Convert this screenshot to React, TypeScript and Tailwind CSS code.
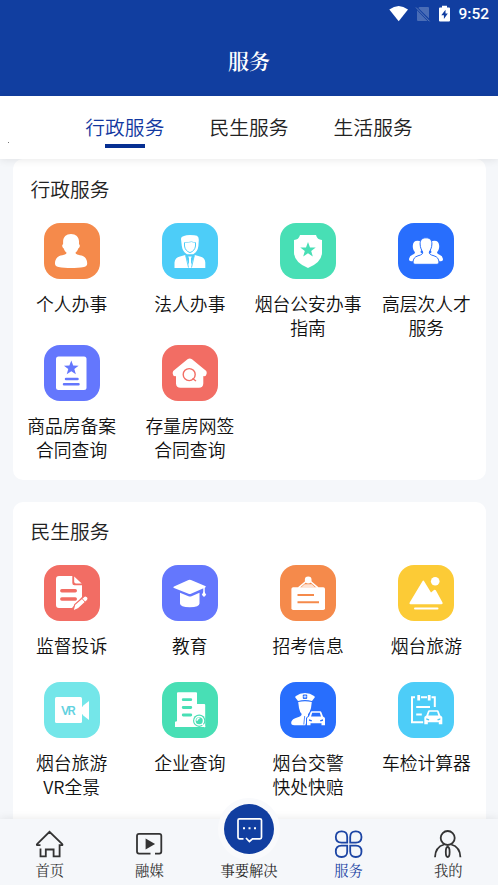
import { ReactNode, useState } from 'react'

const STAR = 'M0 -8 L2 -2.6 L7.7 -2.5 L3.2 1 L4.8 6.5 L0 3.3 L-4.8 6.5 L-3.2 1 L-7.7 -2.5 L-2 -2.6 Z'

interface Service {
  name: string[]
  color: string
  icon: ReactNode
}

// small front-view car, 18x15 box
function Car({ x, y, back }: { x: number; y: number; back: string }) {
  return (
    <g transform={`translate(${x} ${y})`}>
      <path d="M4 -1.2H14L17 5L19 7V15.5H-1V7L1 5Z" fill={back} />
      <path d="M4.8 0.3H13.2Q14 0.3 14.3 1L16 5.4L17.5 6.6Q18 7 18 8V14.2H14.5V12.3H3.5V14.2H0V8Q0 7 .5 6.6L2 5.4L3.7 1Q4 .3 4.8 .3Z" />
      <path d="M5.2 1.8H12.8L14 5.4H4Z" fill={back} />
      <path d="M2 8.3L5 9.2L4.5 10.4L2 9.8ZM16 8.3L13 9.2L13.5 10.4L16 9.8Z" fill={back} />
    </g>
  )
}

const adminServices: Service[] = [
  {
    name: ['个人办事'],
    color: '#f58a4b',
    icon: (
      <path d="M27 11C31.8 11 35 14 35 18.5V21.2C36.4 21.6 36 24.6 34.2 25.4C33.6 27.5 32.6 28.8 31.4 29.8C31.6 31.4 34 31.8 37.5 32.6C41.5 33.6 43.2 37 43.2 40.5C43.2 42.6 42.2 43.4 40 43.9C32 45.3 22 45.3 14.5 43.9C12 43.4 11 42.6 11 40.5C11 37 12.8 33.6 16.7 32.6C20.2 31.8 22.5 31.4 22.6 29.8C21.4 28.8 20.4 27.5 19.8 25.4C18 24.6 17.7 21.6 19.1 21.2V18.5C19.1 14 22.2 11 27 11Z" />
    ),
  },
  {
    name: ['法人办事'],
    color: '#4dcdf8',
    icon: (
      <>
        <path d="M19 16Q19 13.5 22 13Q24 12 28 12Q33 12 35 12.8Q37 14 36.8 17L36.4 23Q35.8 28.5 31.2 31.2H25Q20.5 28.5 19.8 23Z" />
        <path d="M22.5 19.5V23Q23.2 28 28 29.6Q32.8 28 33.5 23V19.5" fill="none" stroke="#4dcdf8" strokeWidth="1" />
        <path d="M22.5 19.5Q27 19.8 29.5 18.6Q31.5 19.8 33.5 19.5" fill="none" stroke="#4dcdf8" strokeWidth=".6" />
        <path d="M12.5 45V39.5Q13 34.5 18 33.5L23.2 32L27 42L27 35.2L26.2 33.5H29.8L29 35.2V42L32.8 32L38 33.5Q43 34.5 43.3 39.5V45Z" />
        <path d="M23.7 32.5L26.5 44.5M32.3 32.5L29.5 44.5" stroke="#4dcdf8" strokeWidth=".9" />
      </>
    ),
  },
  {
    name: ['烟台公安办事', '指南'],
    color: '#48dfb5',
    icon: (
      <>
        <path d="M20 12H36Q37.2 16.8 42 17V30Q41.5 39.5 28 45Q14.5 39.5 14 30V17Q18.8 16.8 20 12Z" />
        <path d={STAR} transform="translate(28 27)" fill="#48dfb5" />
      </>
    ),
  },
  {
    name: ['高层次人才', '服务'],
    color: '#286efd',
    icon: (
      <>
        <path d="M19.5 17.8C23 17.8 24.6 20 24.2 23.5C24 26.5 22.5 27.8 22.5 29.3Q24.5 31 25 32L17 38.3H13Q10.8 38.3 11 36Q11.5 32.8 14.5 31.8Q17 31 17 29.3C15 27 14.7 24.5 14.8 22.7C14.9 19.8 16.5 17.8 19.5 17.8Z" />
        <path d="M36.5 17.8C33 17.8 31.4 20 31.8 23.5C32 26.5 33.5 27.8 33.5 29.3Q31.5 31 31 32L39 38.3H43Q45.2 38.3 45 36Q44.5 32.8 41.5 31.8Q39 31 39 29.3C41 27 41.3 24.5 41.2 22.7C41.1 19.8 39.5 17.8 36.5 17.8Z" />
        <path d="M28 14.8C32 14.8 34 17.2 33.9 21C33.8 25 32.2 27.4 31.3 29C31 31.2 32.5 31.8 36 32.8C39.5 33.8 40.7 36 41 39Q41.2 41.3 39 41.3H17Q14.8 41.3 15 39C15.3 36 16.5 33.8 20 32.8C23.5 31.8 25 31.2 24.7 29C23.8 27.4 22.2 25 22.1 21C22 17.2 24 14.8 28 14.8Z" stroke="#286efd" strokeWidth="1" />
      </>
    ),
  },
  {
    name: ['商品房备案', '合同查询'],
    color: '#6477fd',
    icon: (
      <>
        <rect x="12" y="11.5" width="30.5" height="33.5" rx="2.5" />
        <path d={STAR} transform="translate(27.3 23) scale(.95)" fill="#6477fd" />
        <path d="M22 34H33.5M20 39.3H34.5" stroke="#6477fd" strokeWidth="2.5" strokeLinecap="round" />
      </>
    ),
  },
  {
    name: ['存量房网签', '合同查询'],
    color: '#f26d64',
    icon: (
      <>
        <path d="M25.5 14.2Q27.7 12.6 30 14.2L44.3 26Q45.6 28.5 44 30.5Q42.8 31.6 41.3 31V38.5Q41 42.8 37 42.8H18.5Q14.3 42.8 14 38.5V31Q12.5 31.6 11.3 30.5Q9.8 28.5 11.2 26Z" />
        <circle cx="27.2" cy="29.6" r="6" fill="none" stroke="#f26d64" strokeWidth="1.4" />
        <path d="M30.5 33.5L34 36" stroke="#f26d64" strokeWidth="1.4" />
      </>
    ),
  },
]

const lifeServices: Service[] = [
  {
    name: ['监督投诉'],
    color: '#f26d64',
    icon: (
      <>
        <path d="M15 11H28.3V18Q28.3 20.2 30.5 20.2H38V32L28 43H15Q12 43 12 40V14Q12 11 15 11Z" />
        <path d="M30.2 11.5L37.7 18.6H32Q30.2 18.6 30.2 16.8Z" />
        <path d="M17.8 25.7H31.3M17.8 34H31.3" stroke="#f26d64" strokeWidth="3.4" strokeLinecap="round" />
        <path d="M29 46L30.7 39.5L40.3 31.3Q42.5 30.3 44 32.8Q44.2 34.5 43.3 35.5L34 43.8Z" stroke="#f26d64" strokeWidth="1.1" />
        <path d="M38 33.5L41 37" stroke="#f26d64" strokeWidth=".9" />
      </>
    ),
  },
  {
    name: ['教育'],
    color: '#6477fd',
    icon: (
      <>
        <path d="M26.5 15.1Q27.8 14.5 29 15.1L43.2 21Q44.7 21.8 43.2 22.6L29 28.8Q27.8 29.3 26.5 28.8L12 23Q10.4 22.2 12 21.4Z" />
        <path d="M18 27.8L26.5 31.2Q28 31.6 29.5 31.2L37.5 27.8V38.5Q37.5 42.2 27.8 42.2Q18 42.2 18 38.5Z" />
        <path d="M42 22V28" stroke="#fff" strokeWidth="1.5" />
        <path d="M42 26.2L44.2 29.7L42 32L39.8 29.7Z" />
      </>
    ),
  },
  {
    name: ['招考信息'],
    color: '#f58a4b',
    icon: (
      <>
        <rect x="11.4" y="22.2" width="33.6" height="22.8" rx="1.8" />
        <circle cx="28.2" cy="15" r="3.4" />
        <path d="M26.5 16L18.5 22.8M30 16L38 22.8" stroke="#fff" strokeWidth="1.6" />
        <path d="M24.6 19.3H31.8L35 22.2H21.3Z" opacity=".75" />
        <path d="M17.5 30H34M17.5 37.2H39" stroke="#f58a4b" strokeWidth="2" />
      </>
    ),
  },
  {
    name: ['烟台旅游'],
    color: '#fccb36',
    icon: (
      <>
        <path d="M24.3 16.4Q25.3 14.8 26.3 16.4L33 27.5L36 25Q37 24.2 37.8 25.2L44.5 37.5Q45.2 39.2 43.5 39.2H12.5Q10.8 39.2 11.7 37.5Z" />
        <circle cx="37.2" cy="16.2" r="4.3" />
        <path d="M17 43.6H39.5" stroke="#fff" strokeWidth="2" strokeLinecap="round" />
      </>
    ),
  },
  {
    name: ['烟台旅游', 'VR全景'],
    color: '#74e6e9',
    icon: (
      <>
        <rect x="11" y="15" width="27" height="26" rx="1.5" />
        <path d="M38 24.5L45 19V38L38 32.5Z" />
        <path d="M38.5 20V24.5M38.5 32.5V37" stroke="#74e6e9" strokeWidth="1" />
        <text x="17" y="33" fill="#62d2df" fontSize="13" fontWeight="500" letterSpacing="-1.8" fontFamily="Roboto, sans-serif">
          VR
        </text>
      </>
    ),
  },
  {
    name: ['企业查询'],
    color: '#48dfb5',
    icon: (
      <>
        <path d="M16 10.3H34Q35 10.3 35 11.3V22H42.2Q43.2 22 43.2 23V45H13V40.2Q13 39.3 15 39.3V11.3Q15 10.3 16 10.3Z" />
        <path d="M21.2 17.7H28.8M21.2 25.5H28.8M21.2 33H28.8" stroke="#48dfb5" strokeWidth="2.8" strokeLinecap="round" />
        <circle cx="37.2" cy="38.7" r="6.2" fill="#48dfb5" />
        <circle cx="37.2" cy="38.7" r="4.3" fill="#48dfb5" stroke="#fff" strokeWidth="1.5" />
        <path d="M35 38.8Q35 36.5 37.5 36.3M40 42L43 45" stroke="#fff" strokeWidth="1.4" fill="none" />
      </>
    ),
  },
  {
    name: ['烟台交警', '快处快赔'],
    color: '#286efd',
    icon: (
      <>
        <path d="M15.5 14.2Q20 11 25 11Q30 11 34.5 14.2Q35.5 15.5 33.5 17L32 19Q25 17.2 18 19L16.5 17Q14.5 15.5 15.5 14.2Z" />
        <rect x="22.8" y="12.6" width="4.4" height="4.4" rx="1" fill="#286efd" />
        <path d="M25 13.2V16.2M23.5 14.7H26.5" stroke="#fff" strokeWidth=".8" />
        <path d="M18.2 20Q25 18.3 31.8 20L31 26Q29.7 31 28 32V35L25.3 43.3H14.5Q10.5 43.3 11.3 39.8Q12.4 37 16.5 35.8Q21.5 34.5 21.7 32Q19.8 30 19 26Z" />
        <path d="M24.7 34L23.8 42.5" stroke="#286efd" strokeWidth=".8" />
        <Car x={27} y={29} back="#286efd" />
      </>
    ),
  },
  {
    name: ['车检计算器'],
    color: '#4dcdf8',
    icon: (
      <>
        <path d="M17 15.2H14V40.3H25.5M23 15.2H29M33.5 15.2H36.8V25" fill="none" stroke="#fff" strokeWidth="2" />
        <path d="M20.7 13V18.4M31.2 13V18.4" stroke="#fff" strokeWidth="2.8" />
        <path d="M18.2 25H32M18.2 32.5H23.8" stroke="#fff" strokeWidth="2" />
        <Car x={26.3} y={28} back="#4dcdf8" />
      </>
    ),
  },
]

const tabs = ['行政服务', '民生服务', '生活服务']

function StatusBar() {
  return (
    <div className="flex h-[27px] items-center justify-end pr-[9px] text-white">
      <svg width="62" height="18" viewBox="0 0 62 18">
        <path d="M0.3 4.6Q9.7 -2.8 19 4.6L9.7 16.2Z" fill="#fff" />
        <path d="M30.5 2H39Q40 2 40 3V13.5L29.3 3.1ZM28 5.3L38.5 16H29Q28 16 28 15Z" fill="#4a6db6" />
        <path d="M27 2.5L40.5 16.3" stroke="#5f7fbd" strokeWidth="1" />
        <path d="M53 .8H58V2.4H60Q61 2.4 61 3.4V15.5Q61 16.5 60 16.5H51Q50 16.5 50 15.5V3.4Q50 2.4 51 2.4H53Z" fill="#fff" />
        <path d="M56.5 4.8L52.3 10.3H54.9V14L58.8 8.5H56.5Z" fill="#113ea0" />
      </svg>
      <span className="ml-[7px] pt-[2px] font-[Roboto,sans-serif] text-[15.5px] font-medium">9:52</span>
    </div>
  )
}

function ServiceItem({ service }: { service: Service }) {
  return (
    <div className="flex flex-col items-center">
      <svg width="56" height="56" viewBox="0 0 56 56" fill="#fff">
        <rect width="56" height="56" rx="16" fill={service.color} />
        {service.icon}
      </svg>
      <div className="mt-3 mb-px text-center text-[17.8px] leading-6 whitespace-nowrap text-[#111]">
        {service.name.map(line => <div key={line}>{line}</div>)}
      </div>
    </div>
  )
}

const navIcons = {
  home: <path d="M5.5 16.2H3Q1 16.2 2.3 14.8L14.5 2.8L27 14.8Q28.2 16.2 26.5 16.2H24.6V27.3H18.6V20.5H10.8V27.3H5.5V19.5" />,
  media: (
    <>
      <path d="M16.5 24.6H5Q3 24.6 3 22.6V6.8Q3 4.8 5 4.8H25.3Q27.3 4.8 27.3 6.8V22.6Q27.3 24.6 25.3 24.6H21" />
      <path d="M12.5 11V19L19.3 15Z" fill="currentColor" />
    </>
  ),
  service: (
    <path d="M13.2 13.7H7.5Q1.8 13.5 1.8 8T7.5 2.3T13.2 8ZM16.2 13.7H21.9Q27.5 13.5 27.5 8T21.9 2.3T16.2 8ZM13.2 16.7H7.5Q1.8 16.9 1.8 22.4T7.5 28T13.2 22.4ZM16.2 16.7H21.9Q27.5 16.9 27.5 22.4T21.9 28T16.2 22.4Z" />
  ),
  mine: (
    <>
      <circle cx="14.7" cy="9" r="7" />
      <path d="M2 28.3Q2.2 18 11.2 15.5M18.2 15.5Q27.2 18 27.4 28.3" />
      <ellipse cx="14.7" cy="23" rx="1.9" ry="5" />
    </>
  ),
}

function NavItem({ icon, label, active }: { icon: keyof typeof navIcons; label: string; active?: boolean }) {
  return (
    <button className={`flex flex-1 flex-col items-center pt-[10px] ${active ? 'text-[#1c45a4]' : 'text-[#333]'}`}>
      <svg width="30" height="30" viewBox="0 0 30 30" fill="none" stroke="currentColor" strokeWidth="1.8">
        {navIcons[icon]}
      </svg>
      <span className="mt-px text-[14.3px] leading-5">{label}</span>
    </button>
  )
}

export default function App() {
  const [tab, setTab] = useState(0)

  return (
    <div className="flex h-[885px] w-[498px] flex-col overflow-hidden bg-[#f5f7fa] font-['Noto_Sans_CJK_SC',sans-serif] font-[350]">
      <header className="h-24 shrink-0 bg-[#113ea0]">
        <StatusBar />
        <h1 className="pt-[17px] text-center font-['Noto_Serif_CJK_SC','Noto_Sans_CJK_SC',serif] text-[21px] leading-8 font-semibold text-white">服务</h1>
      </header>

      <div className="relative z-10 flex h-[63px] shrink-0 justify-center gap-[45px] bg-white pt-4 shadow-[0_1px_8px_rgba(0,0,0,0.09)]">
        <span className="absolute top-[46px] left-2 size-px bg-[#777]" />
        {tabs.map((name, i) => (
          <button
            key={name}
            onClick={() => setTab(i)}
            className={`flex flex-col items-center text-[19.8px] leading-[30px] ${i === tab ? 'text-[#1238a0]' : 'text-[#222]'}`}
          >
            {name}
            {i === tab && <span className="mt-[2px] h-1 w-10 bg-[#062f92]" />}
          </button>
        ))}
      </div>

      <main className="min-h-0 flex-1 overflow-hidden px-[12.5px]">
        <section className="h-[321px] rounded-[10px] bg-white pt-[15px]">
          <h2 className="pl-[18px] text-[19.8px] leading-[30px] text-[#222]">行政服务</h2>
          <div className="mt-[19px] grid grid-cols-4 gap-y-[4.5px]">
            {adminServices.map(s => <ServiceItem key={s.name.join('')} service={s} />)}
          </div>
        </section>

        <section className="mt-[22px] h-[340px] rounded-[10px] bg-white pt-[14px]">
          <h2 className="pl-[18px] text-[19.8px] leading-[30px] text-[#222]">民生服务</h2>
          <div className="mt-[19px] grid grid-cols-4 gap-y-6">
            {lifeServices.map(s => <ServiceItem key={s.name.join('')} service={s} />)}
          </div>
        </section>
      </main>

      <nav className="z-10 flex h-[66px] shrink-0 bg-[#f5f7fa] font-['Noto_Serif_CJK_SC','Noto_Sans_CJK_SC',serif] font-normal shadow-[0_-1px_8px_rgba(0,0,0,0.08)]">
        <NavItem icon="home" label="首页" />
        <NavItem icon="media" label="融媒" />
        <button className="-mt-[21px] flex flex-1 flex-col items-center text-[#222]">
          <span className="flex size-[62px] items-center justify-center rounded-full bg-[#f9fafc]">
            <svg width="50" height="50" viewBox="0 0 50 50" fill="none" stroke="#fff" strokeWidth="1.7">
              <circle cx="25" cy="25" r="25" fill="#113ea0" stroke="none" />
              <path d="M19.5 34.8H15.5Q14 34.8 14 33.3V16.3Q14 14.8 15.5 14.8H36Q37.5 14.8 37.5 16.3V33.3Q37.5 34.8 36 34.8H28.5L25.4 37.5L22 34" />
              <path d="M19 24.3H21M24.5 24.3H26.5M30 24.3H32" strokeWidth="2.1" />
            </svg>
          </span>
          <span className="text-[14.3px] leading-5 whitespace-nowrap">事要解决</span>
        </button>
        <NavItem icon="service" label="服务" active />
        <NavItem icon="mine" label="我的" />
      </nav>
    </div>
  )
}
